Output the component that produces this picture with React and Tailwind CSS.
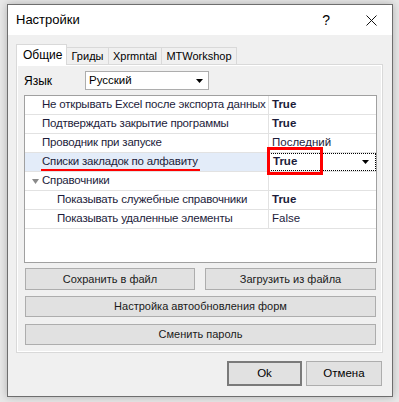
import React from 'react';

const rows = [
  { name: 'Не открывать Excel после экспорта данных', value: 'True', bold: true },
  { name: 'Подтверждать закрытие программы', value: 'True', bold: true },
  { name: 'Проводник при запуске', value: 'Последний' },
  { name: 'Списки закладок по алфавиту', value: 'True', bold: true, selected: true },
  { name: 'Справочники', category: true },
  { name: 'Показывать служебные справочники', value: 'True', bold: true, sub: true },
  { name: 'Показывать удаленные элементы', value: 'False', sub: true },
];

const font = { fontFamily: '"Liberation Sans", Arial, sans-serif' };

const Arrow = () => (
  <svg width="7" height="4" viewBox="0 0 7 4">
    <path d="M0 0h7L3.5 4z" fill="#000" />
  </svg>
);

const PropRow = ({ row }) => (
  <div className={`flex h-[19px] border-b border-[#e2e2e2] whitespace-nowrap text-[11.5px] ${row.selected ? 'bg-[#e3ecf9]' : 'bg-white'}`}>
    <div className="w-[16px] flex items-center justify-center">
      {row.category && (
        <svg width="7" height="5" viewBox="0 0 7 5" className="ml-[4px]">
          <path d="M0 0h7L3.5 5z" fill="#8a8a8a" />
        </svg>
      )}
    </div>
    <div className={`w-[228px] border-r border-[#e2e2e2] flex items-center overflow-hidden tracking-[-0.2px] text-[#1c1c3a] ${row.sub ? 'pl-[16px]' : 'pl-[1px]'}`}>
      {row.name}
    </div>
    {row.selected ? (
      <div className="flex-1 bg-white border border-dotted border-black flex items-center justify-between pl-[3px] pr-[6px]">
        <span className="font-bold text-[#1c1c3a]">{row.value}</span>
        <Arrow />
      </div>
    ) : (
      <div className={`flex-1 flex items-center pl-[3px] text-[#1c1c3a] ${row.bold ? 'font-bold' : ''}`}>
        {row.value}
      </div>
    )}
  </div>
);

const Btn = ({ children, className }) => (
  <div className={`flex items-center justify-center bg-[#e1e1e1] border border-[#adadad] text-[#1a1a1a] text-[11px] ${className}`}>
    {children}
  </div>
);

export default function App() {
  return (
    <div className="w-[399px] h-[402px] bg-[#e8e8e8] pl-[7px] pt-[4px] overflow-hidden text-[12px]" style={font}>
      {/* Window */}
      <div className="relative w-[386px] h-[393px] border border-[#6e6e6e] bg-[#f0f0f0] shadow-[0_0_8px_rgba(0,0,0,0.25)] flex flex-col">
        {/* Title bar */}
        <div className="h-[30px] bg-white flex items-center pl-[8px] pr-[15px]">
          <span className="text-[13px] text-black flex-1">Настройки</span>
          <span className="text-[14px] text-black mr-[36px]">?</span>
          <svg width="11" height="11" viewBox="0 0 11 11">
            <path d="M0.5 0.5l10 10M10.5 0.5l-10 10" stroke="#111" strokeWidth="1" />
          </svg>
        </div>

        {/* Tabs */}
        <div className="pl-[8px] pt-[8px]">
          <div className="flex items-end h-[21px] text-[11px] whitespace-nowrap">
            <div className="h-[21px] w-[51px] bg-white border border-b-0 border-[#d9d9d9] flex items-center pl-[6px] relative z-10 -mb-[1px] text-black text-[12px]">
              Общие
            </div>
            <div className="h-[17px] w-[42px] border border-b-0 border-l-0 border-[#d9d9d9] flex items-center justify-center pt-[1px] text-black">Гриды</div>
            <div className="h-[17px] w-[53px] border border-b-0 border-l-0 border-[#d9d9d9] flex items-center justify-center pt-[1px] text-black">Xprmntal</div>
            <div className="h-[17px] w-[75px] border border-b-0 border-l-0 border-[#d9d9d9] flex items-center justify-center pt-[1px] text-black">MTWorkshop</div>
          </div>

          {/* Panel */}
          <div className="w-[367px] h-[289px] border border-[#d9d9d9] bg-white p-[1px]">
            <div className="h-full bg-[#f0f0f0] flex flex-col pl-[6px] pt-[5px]">
              {/* Language */}
              <div className="flex items-center h-[19px]">
                <span className="w-[61px] text-black">Язык</span>
                <div className="w-[124px] h-[19px] bg-white border border-[#adadad] flex items-center justify-between pl-[3px] pr-[5px] text-black text-[11.5px]">
                  <span>Русский</span>
                  <Arrow />
                </div>
              </div>

              {/* Property grid */}
              <div className="relative mt-[5px] w-[353px] h-[168px] border border-[#a0a0a0] bg-white">
                {rows.map((r) => (
                  <PropRow key={r.name} row={r} />
                ))}
                <div className="absolute left-[16px] top-[73px] w-[159px] h-[2px] bg-[#ff0000]" />
                <div className="absolute left-[242px] top-[51px] w-[56px] h-[28px] border-[3px] border-[#ff0000]" />
              </div>

              {/* Buttons */}
              <div className="flex gap-[10px] mt-[5px] pl-[1px]">
                <Btn className="w-[170px] h-[22px]">Сохранить в файл</Btn>
                <Btn className="w-[171px] h-[22px]">Загрузить из файла</Btn>
              </div>
              <Btn className="w-[351px] h-[21px] mt-[6px] ml-[1px]">Настройка автообновления форм</Btn>
              <Btn className="w-[351px] h-[21px] mt-[7px] ml-[1px]">Сменить пароль</Btn>
            </div>
          </div>
        </div>

        {/* Bottom buttons */}
        <div className="flex justify-end gap-[4px] pr-[10px] mt-[8px]">
          <div className="w-[75px] h-[25px] bg-[#e1e1e1] border-2 border-[#7a7a7a] flex items-center justify-center text-black text-[11.5px]">Ok</div>
          <div className="w-[76px] h-[25px] bg-[#e1e1e1] border border-[#adadad] flex items-center justify-center text-black text-[11.5px]">Отмена</div>
        </div>
      </div>
    </div>
  );
}
